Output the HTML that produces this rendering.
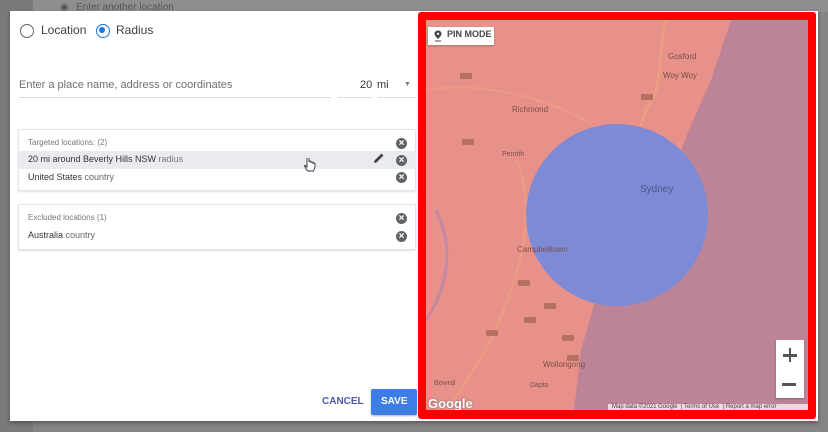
<!DOCTYPE html>
<html><head><meta charset="utf-8"><style>
*{box-sizing:border-box;margin:0;padding:0}
body{width:828px;height:432px;overflow:hidden;background:#858585;font-family:"Liberation Sans",Arial,sans-serif;position:relative}
.abs{position:absolute}
.leftstrip{left:0;top:0;width:33px;height:432px;background:#7a7a7a}
.topbg{left:33px;top:0;width:795px;height:12px;background:#8e8e8e}
.dlg{left:10px;top:11px;width:808px;height:410px;background:#fff;box-shadow:0 2px 4px rgba(0,0,0,.35)}
.t{position:absolute;white-space:nowrap;color:#3c4043}
.radio{position:absolute;width:14px;height:14px;border:1.6px solid #5f6368;border-radius:50%}
.card{position:absolute;left:18px;width:398px;border:1px solid #e3e3e3;box-shadow:0 1px 2px rgba(0,0,0,.12);background:#fff}
.x{position:absolute;width:11px;height:11px;border-radius:50%;background:#5f6368;color:#fff;font-size:10px;line-height:11px;text-align:center;font-weight:bold}
.lbl{position:absolute;font-size:7px;color:#7a4f4a;white-space:nowrap}
.sh{position:absolute;width:12px;height:6px;background:#b5705f;border-radius:1px}
</style></head><body>
<div class="abs leftstrip"></div>
<div class="abs topbg"></div>
<div class="t" style="left:60px;top:2px;font-size:10px;color:#555">◉</div>
<div class="t" style="left:76px;top:2px;font-size:10px;color:#555">Enter another location</div>
<div class="abs dlg"></div>

<div class="radio" style="left:20px;top:24px"></div>
<div class="t" style="left:41px;top:23px;font-size:12px">Location</div>
<div class="radio" style="left:96px;top:24px;border-color:#1a73e8"><div style="position:absolute;left:2.4px;top:2.4px;width:6px;height:6px;border-radius:50%;background:#1a73e8"></div></div>
<div class="t" style="left:116px;top:23px;font-size:12px">Radius</div>

<div class="t" style="left:19px;top:79px;font-size:11px;color:#6f6f6f">Enter a place name, address or coordinates</div>
<div class="abs" style="left:19px;top:97px;width:312px;height:1px;background:#ddd"></div>
<div class="t" style="left:360px;top:79px;font-size:11px;color:#333">20</div>
<div class="abs" style="left:338px;top:97px;width:34px;height:1px;background:#ddd"></div>
<div class="t" style="left:377px;top:79px;font-size:11px;color:#333">mi</div>
<div class="t" style="left:404px;top:81px;font-size:7px;color:#777">▼</div>
<div class="abs" style="left:378px;top:97px;width:38px;height:1px;background:#ddd"></div>

<div class="card" style="top:129px;height:62px"></div>
<div class="t" style="left:28px;top:138px;font-size:8px;color:#777">Targeted locations: (2)</div>
<div class="x" style="left:396px;top:138px">×</div>
<div class="abs" style="left:19px;top:151px;width:397px;height:18px;background:#e9ebee"></div>
<div class="t" style="left:28px;top:154px;font-size:9px;color:#333">20 mi around Beverly Hills NSW <span style="color:#777">radius</span></div>
<svg class="abs" style="left:304px;top:158px" width="12" height="16" viewBox="0 0 12 16"><path d="M3 1 v8 l-1.5-1.5 q-1 -0.5 -1 0.5 l3 5 h6 l1.5-4 v-3 q0-1 -1-1 q-1 0 -1 1 v-1 q0-1 -1-1 q-1 0-1 1 v-1 q0-1-1-1 q-1 0-1 1 v-4 q0-1-1-1 q-1 0 -1 1z" fill="#fff" stroke="#333" stroke-width="0.9"/></svg>
<svg class="abs" style="left:373px;top:152px" width="12" height="12" viewBox="0 0 12 12"><path d="M1 11 L1.5 8.5 L8.5 1.5 L10.5 3.5 L3.5 10.5 Z" fill="#444"/></svg>
<div class="x" style="left:396px;top:155px">×</div>
<div class="t" style="left:28px;top:172px;font-size:9px;color:#333">United States <span style="color:#666">country</span></div>
<div class="x" style="left:396px;top:172px">×</div>

<div class="card" style="top:204px;height:46px"></div>
<div class="t" style="left:28px;top:213px;font-size:8px;color:#777">Excluded locations (1)</div>
<div class="x" style="left:396px;top:213px">×</div>
<div class="t" style="left:28px;top:230px;font-size:9px;color:#333">Australia <span style="color:#666">country</span></div>
<div class="x" style="left:396px;top:231px">×</div>

<div class="t" style="left:322px;top:396px;font-size:10px;font-weight:bold;color:#4a5aa8">CANCEL</div>
<div class="abs" style="left:371px;top:389px;width:46px;height:26px;background:#3c7ee6;border-radius:2px;box-shadow:0 1px 2px rgba(0,0,0,.3)"></div>
<div class="t" style="left:381px;top:396px;font-size:10px;font-weight:bold;color:#fff">SAVE</div>

<!-- map -->
<div class="abs" style="left:418px;top:12px;width:398px;height:407px;background:#ff0000;border-radius:3px"></div>
<div class="abs" style="left:426px;top:20px;width:382px;height:390px;overflow:hidden;background:#e8918a">
  <svg width="382" height="390" style="position:absolute;left:0;top:0">
    <path d="M305 0 L382 0 L382 390 L148 390 L155 330 L168 285 L200 255 L240 205 L255 130 L265 105 L285 60 Z" fill="#bd8497"/>
    <path d="M240 0 C230 40 240 60 220 90 C210 120 205 140 195 160" stroke="#f0a27f" stroke-width="3" fill="none" opacity=".7"/>
    <path d="M0 70 C60 60 120 80 160 100 C180 120 190 140 200 170" stroke="#f0a27f" stroke-width="2" fill="none" opacity=".6"/>
    <path d="M90 140 C110 180 100 250 60 330 C40 360 30 380 20 390" stroke="#f0a27f" stroke-width="2.5" fill="none" opacity=".6"/>
    <path d="M10 190 C30 230 20 270 0 300" stroke="#a985b0" stroke-width="3" fill="none" opacity=".6"/>
    <circle cx="191" cy="195" r="91" fill="#7d8ad6"/>
  </svg>
  <div class="lbl" style="left:242px;top:32px;font-size:8px">Gosford</div>
  <div class="lbl" style="left:237px;top:51px;font-size:8px">Woy Woy</div>
  <div class="lbl" style="left:86px;top:85px;font-size:8px">Richmond</div>
  <div class="lbl" style="left:76px;top:131px;font-size:7px">Penrith</div>
  <div class="lbl" style="left:214px;top:164px;font-size:10px;color:#4e5585">Sydney</div>
  <div class="lbl" style="left:91px;top:225px;font-size:8px">Campbelltown</div>
  <div class="lbl" style="left:117px;top:340px;font-size:8px">Wollongong</div>
  <div class="lbl" style="left:104px;top:362px;font-size:7px">Dapto</div>
  <div class="lbl" style="left:8px;top:360px;font-size:7px">Bowral</div>
  <div class="sh" style="left:34px;top:53px"></div>
  <div class="sh" style="left:36px;top:119px"></div>
  <div class="sh" style="left:215px;top:74px"></div>
  <div class="sh" style="left:92px;top:260px"></div>
  <div class="sh" style="left:118px;top:283px"></div>
  <div class="sh" style="left:98px;top:297px"></div>
  <div class="sh" style="left:60px;top:310px"></div>
  <div class="sh" style="left:136px;top:315px"></div>
  <div class="sh" style="left:141px;top:335px"></div>
  <div class="abs" style="left:2px;top:7px;width:66px;height:18px;background:#fff;box-shadow:0 1px 2px rgba(0,0,0,.25)"></div>
  <svg class="abs" style="left:8px;top:10px" width="8" height="12" viewBox="0 0 8 12"><path d="M4 0.5 C1.8 0.5 0.5 2 0.5 3.8 C0.5 6 4 9 4 9 C4 9 7.5 6 7.5 3.8 C7.5 2 6.2 0.5 4 0.5Z" fill="#444"/><circle cx="4" cy="3.8" r="1.2" fill="#fff"/><rect x="1" y="10.5" width="6" height="1" fill="#444"/></svg>
  <div class="t" style="left:21px;top:9px;font-size:9px;font-weight:bold;color:#444">PIN MODE</div>
  <div class="abs" style="left:350px;top:320px;width:28px;height:58px;background:#fff;box-shadow:0 1px 2px rgba(0,0,0,.3)"></div>
  <div class="abs" style="left:357px;top:334px;width:14px;height:2.5px;background:#555"></div>
  <div class="abs" style="left:362.75px;top:328px;width:2.5px;height:14px;background:#555"></div>
  <div class="abs" style="left:356px;top:363px;width:14px;height:2.5px;background:#555"></div>
  <div class="t" style="left:2px;top:376px;font-size:13px;color:#fff;font-weight:bold;text-shadow:0 0 2px #666">Google</div>
  <div class="abs" style="left:182px;top:384px;width:200px;height:8px;background:rgba(255,255,255,.7)"></div>
  <div class="t" style="left:186px;top:384px;font-size:6px;color:#444">Map data ©2021 Google &nbsp;| Terms of Use &nbsp;| Report a map error</div>
</div>
</body></html>
